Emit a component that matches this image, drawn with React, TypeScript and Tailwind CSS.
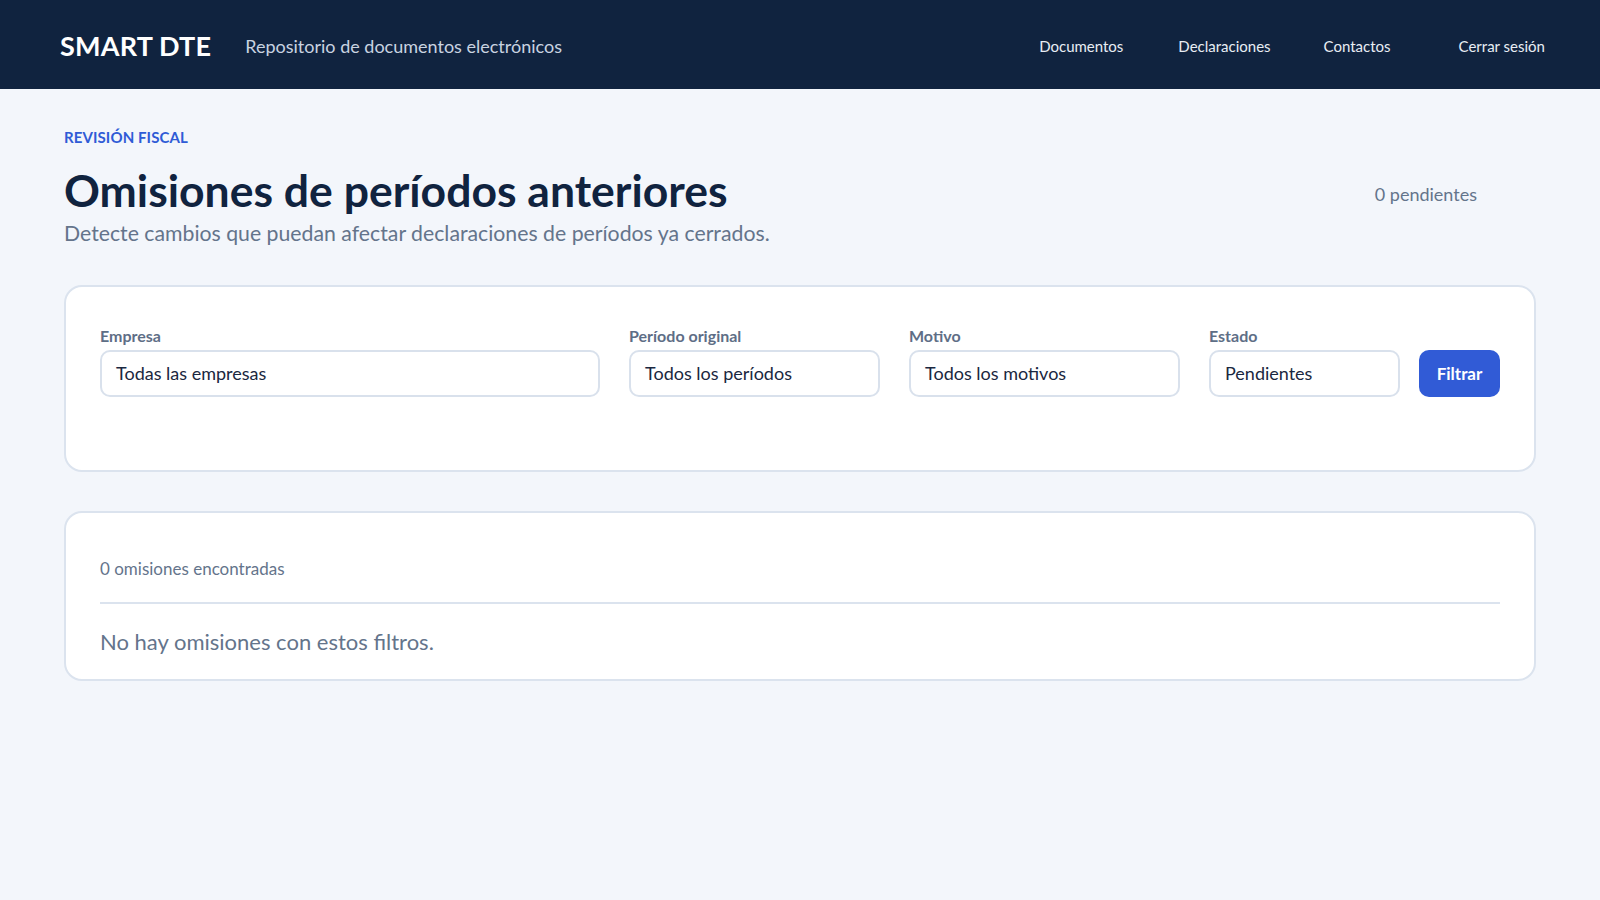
import { useState } from "react";

const font = { fontFamily: "Lato, 'Noto Sans', sans-serif" };

const Field = ({
  label,
  value,
  className,
}: {
  label: string;
  value: string;
  className: string;
}) => (
  <div className={`flex flex-col gap-1 ${className}`}>
    <label className="text-[16px] font-bold leading-5 text-[#5e6e86]">{label}</label>
    <div className="h-[47px] rounded-[10px] border-2 border-[#d9e1ec] bg-white px-3.5 flex items-center text-[18px] text-[#1a2740]">
      {value}
    </div>
  </div>
);

export default function App() {
  const [estado] = useState("Pendientes");

  return (
    <div className="min-h-screen bg-[#f3f6fb]" style={font}>
      {/* Header */}
      <header className="h-[89px] bg-[#10233f] flex items-center pt-[4px] pl-[60px] pr-[55px]">
        <div className="text-[27px] font-bold text-white tracking-[0.2px]">SMART DTE</div>
        <div className="ml-[34px] text-[18px] text-[#c9d3e1]">
          Repositorio de documentos electrónicos
        </div>
        <nav className="ml-auto flex items-center text-[15px] text-[#e8edf4]">
          <a className="cursor-pointer">Documentos</a>
          <a className="ml-[55px] cursor-pointer">Declaraciones</a>
          <a className="ml-[53px] cursor-pointer">Contactos</a>
          <button className="ml-[68px] cursor-pointer">Cerrar sesión</button>
        </nav>
      </header>

      <main className="px-16 pt-[38px]">
        {/* Page heading */}
        <div className="flex items-start justify-between">
          <div>
            <div className="text-[15px] font-bold leading-5 uppercase text-[#2f5bd6] tracking-[0.1px]">
              Revisión fiscal
            </div>
            <h1 className="mt-[17px] text-[44.5px] font-bold leading-[52px] text-[#10233f]">
              Omisiones de períodos anteriores
            </h1>
            <p className="mt-[3px] text-[21.25px] leading-7 text-[#64748b]">
              Detecte cambios que puedan afectar declaraciones de períodos ya cerrados.
            </p>
          </div>
          <div className="mt-[54px] mr-[59px] text-[18px] text-[#64748b]">0 pendientes</div>
        </div>

        {/* Filters */}
        <section className="mt-[38px] rounded-[18px] border-2 border-[#dbe3ee] bg-white pt-[39px] pb-[73px] px-[34px]">
          <div className="flex items-end gap-[19px]">
            <div className="flex flex-1 gap-[29px]">
              <Field label="Empresa" value="Todas las empresas" className="flex-1" />
              <Field label="Período original" value="Todos los períodos" className="w-[251px]" />
              <Field label="Motivo" value="Todos los motivos" className="w-[271px]" />
              <Field label="Estado" value={estado} className="w-[191px]" />
            </div>
            <button className="h-[47px] w-[81px] rounded-[10px] bg-[#315bd6] text-[17px] font-bold text-white">
              Filtrar
            </button>
          </div>
        </section>

        {/* Results */}
        <section className="mt-[39px] rounded-[18px] border-2 border-[#dbe3ee] bg-white px-[34px] pt-[44px] pb-[22px]">
          <div className="text-[17px] leading-6 text-[#64748b]">0 omisiones encontradas</div>
          <div className="mt-[21px] h-[2px] bg-[#dbe3ee]" />
          <div className="mt-[23px] text-[22px] leading-[30px] text-[#64748b]">
            No hay omisiones con estos filtros.
          </div>
        </section>
      </main>
    </div>
  );
}
